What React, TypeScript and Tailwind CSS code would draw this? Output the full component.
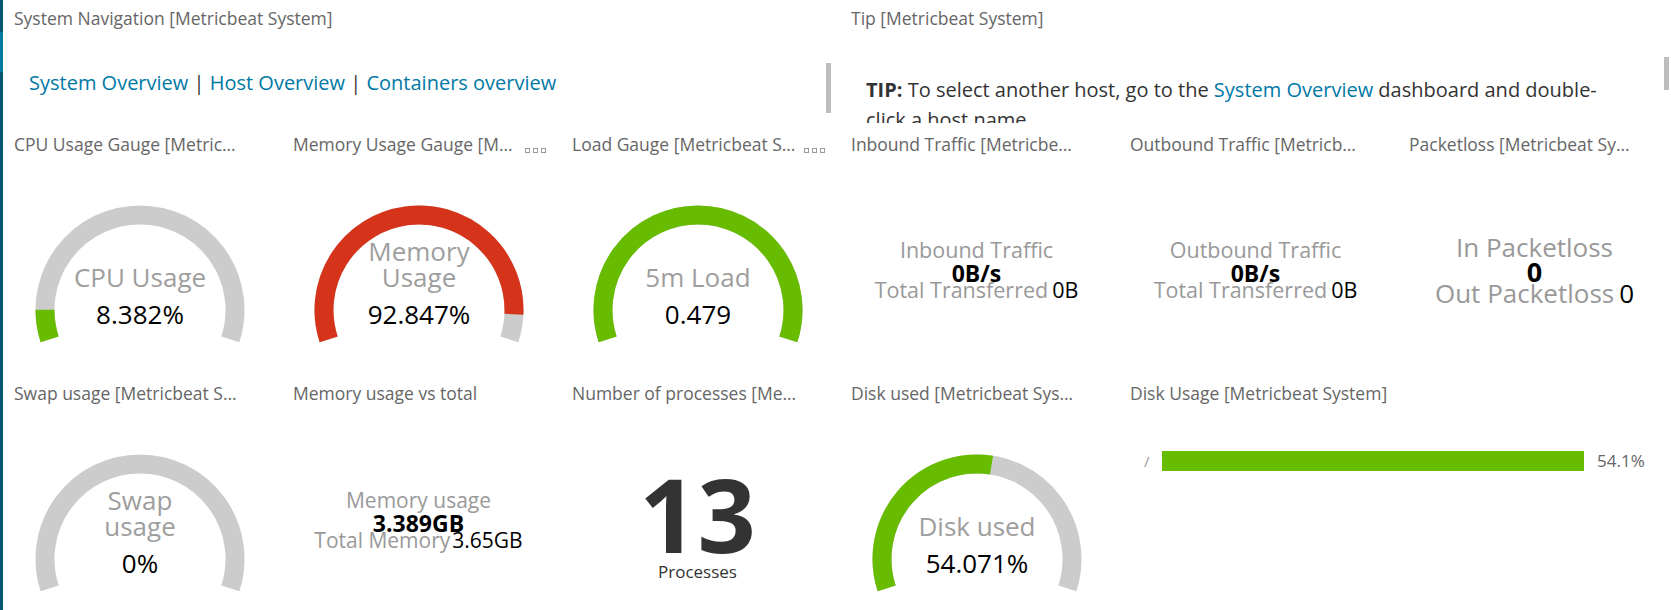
import clsx from "clsx";
import type { ReactNode } from "react";

const GREEN = "#68bc00";
const RED = "#d6331b";
const GRAY = "#cccccc";

function MenuDots() {
  return (
    <span className="flex gap-[3px]">
      <span className="h-[5px] w-[5px] border border-[#999]" />
      <span className="h-[5px] w-[5px] border border-[#999]" />
      <span className="h-[5px] w-[5px] border border-[#999]" />
    </span>
  );
}

function Panel({
  title,
  menu = false,
  className,
  children,
}: {
  title: string;
  menu?: boolean;
  className?: string;
  children: ReactNode;
}) {
  return (
    <div className={clsx("flex min-w-0 flex-col overflow-hidden", className)}>
      <div className="flex h-[36px] shrink-0 items-center pl-[14px] pr-[12px]">
        <span className="min-w-0 flex-1 truncate text-[17.5px] leading-[24px] text-[#666]">{title}</span>
        <span className={clsx("ml-[6px] mt-[12px]", !menu && "invisible")}>
          <MenuDots />
        </span>
      </div>
      <div className="relative min-h-0 flex-1">{children}</div>
    </div>
  );
}

function Gauge({
  value,
  color,
  label,
  valueText,
}: {
  value: number;
  color: string;
  label: string[];
  valueText: string;
}) {
  const cx = 140;
  const cy = 148;
  const r = 95;
  const start = 198;
  const span = 216;
  const pt = (deg: number) => {
    const a = (deg * Math.PI) / 180;
    return `${(cx + r * Math.cos(a)).toFixed(2)} ${(cy - r * Math.sin(a)).toFixed(2)}`;
  };
  const arc = (a0: number, a1: number) =>
    `M ${pt(a0)} A ${r} ${r} 0 ${a0 - a1 > 180 ? 1 : 0} 1 ${pt(a1)}`;

  return (
    <svg width="279" height="214" className="block">
      <path d={arc(start, start - span)} stroke={GRAY} strokeWidth={19} fill="none" />
      {value > 0 && (
        <path d={arc(start, start - span * value)} stroke={color} strokeWidth={19} fill="none" />
      )}
      {label.map((l, i) => (
        <text
          key={l}
          x={cx}
          y={125 - (label.length - 1 - i) * 26.5}
          textAnchor="middle"
          fontSize={26}
          fill="#9e9e9e"
        >
          {l}
        </text>
      ))}
      <text x={cx} y={162} textAnchor="middle" fontSize={26} fill="#000">
        {valueText}
      </text>
    </svg>
  );
}

function Traffic({ label, value, total }: { label: string; value: string; total: string }) {
  return (
    <div className="flex flex-col items-center pt-[76px]">
      <div className="text-[21.5px] leading-[24px] text-[#999]">{label}</div>
      <div className="text-[23px] font-bold leading-[22px] text-black">{value}</div>
      <div className="text-[21.5px] leading-[12px] text-[#999]">
        Total Transferred<span className="ml-[4px] text-black">{total}</span>
      </div>
    </div>
  );
}

export default function App() {
  return (
    <div className="relative h-[610px] w-[1671px] overflow-hidden bg-white font-['Open_Sans',sans-serif]">
      <div className="grid grid-cols-[repeat(6,279px)] grid-rows-[126px_249px_250px]">
        <Panel title="System Navigation [Metricbeat System]" className="col-span-3">
          <div className="pl-[29px] pt-[32px] text-[20px] leading-[30px] text-[#333]">
            <span className="text-[#0079a5]">System Overview</span> |{" "}
            <span className="text-[#0079a5]">Host Overview</span> |{" "}
            <span className="text-[#0079a5]">Containers overview</span>
          </div>
          <div className="absolute right-[6px] top-[27px] h-[50px] w-[5px] bg-[#bdbdbd]" />
        </Panel>

        <Panel title="Tip [Metricbeat System]" className="col-span-3">
          <div className="h-[87px] overflow-hidden">
            <div className="pl-[29px] pr-[58px] pt-[39px] text-[20px] leading-[30px] text-[#333]">
              <b>TIP:</b> To select another host, go to the{" "}
              <span className="text-[#0079a5]">System Overview</span> dashboard and double-click a host
              name.
            </div>
          </div>
          <div className="absolute right-[5px] top-[21px] h-[33px] w-[5px] bg-[#bdbdbd]" />
        </Panel>

        <Panel title="CPU Usage Gauge [Metricbeat System]">
          <Gauge value={0.08382} color={GREEN} label={["CPU Usage"]} valueText="8.382%" />
        </Panel>
        <Panel title="Memory Usage Gauge [Metricbeat System]" menu>
          <Gauge value={0.92847} color={RED} label={["Memory", "Usage"]} valueText="92.847%" />
        </Panel>
        <Panel title="Load Gauge [Metricbeat System]" menu>
          <Gauge value={1} color={GREEN} label={["5m Load"]} valueText="0.479" />
        </Panel>
        <Panel title="Inbound Traffic [Metricbeat System]">
          <Traffic label="Inbound Traffic" value="0B/s" total="0B" />
        </Panel>
        <Panel title="Outbound Traffic [Metricbeat System]">
          <Traffic label="Outbound Traffic" value="0B/s" total="0B" />
        </Panel>
        <Panel title="Packetloss [Metricbeat System]">
          <div className="flex flex-col items-center pt-[71px]">
            <div className="text-[26px] leading-[28px] text-[#999]">In Packetloss</div>
            <div className="text-[27px] font-bold leading-[22px] text-black">0</div>
            <div className="text-[26px] leading-[20px] text-[#999]">
              Out Packetloss<span className="ml-[5px] text-black">0</span>
            </div>
          </div>
        </Panel>

        <Panel title="Swap usage [Metricbeat System]">
          <Gauge value={0} color={GREEN} label={["Swap", "usage"]} valueText="0%" />
        </Panel>
        <Panel title="Memory usage vs total">
          <div className="flex flex-col items-center pt-[77px]">
            <div className="text-[21px] leading-[24px] text-[#999]">Memory usage</div>
            <div className="text-[23px] font-bold leading-[22px] text-black">3.389GB</div>
            <div className="text-[21px] leading-[12px] text-[#999]">
              Total Memory<span className="ml-[2px] text-black">3.65GB</span>
            </div>
          </div>
        </Panel>
        <Panel title="Number of processes [Metricbeat System]">
          <div className="flex flex-col items-center pt-[52px] text-[#333]">
            <div className="text-[102px] font-bold leading-[102px]">13</div>
            <div className="-mt-[3px] text-[17px] leading-[20px]">Processes</div>
          </div>
        </Panel>
        <Panel title="Disk used [Metricbeat System]">
          <Gauge value={0.54071} color={GREEN} label={["Disk used"]} valueText="54.071%" />
        </Panel>
        <Panel title="Disk Usage [Metricbeat System]" className="col-span-2">
          <div className="flex items-center pl-[28px] pt-[40px]">
            <span className="w-[18px] text-[15px] leading-[20px] text-[#999]">/</span>
            <div className="h-[20px] w-[422px] bg-[#68bc00]" />
            <span className="ml-[13px] text-[17px] leading-[20px] text-[#666]">54.1%</span>
          </div>
        </Panel>
      </div>

      <div className="absolute left-0 top-0 h-full w-[3px] bg-[#005571]">
        <div className="mt-[32px] h-[40px] bg-[#0079a5]" />
      </div>
    </div>
  );
}
